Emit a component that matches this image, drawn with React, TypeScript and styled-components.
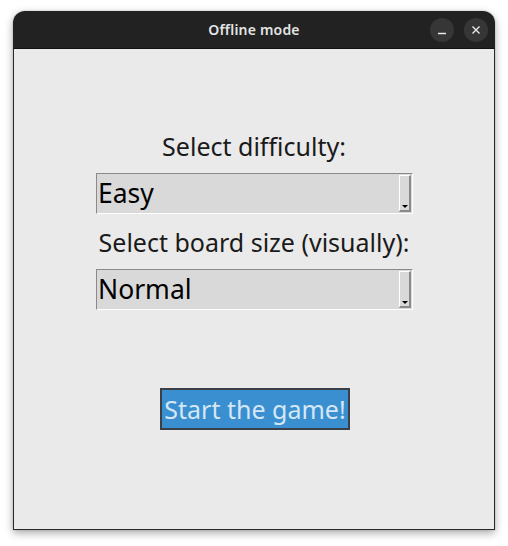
import styled, { createGlobalStyle } from "styled-components";

const GlobalStyle = createGlobalStyle`
  html, body {
    margin: 0;
    padding: 0;
    background: #ffffff;
  }
  body {
    font-family: "Noto Sans", "Open Sans", sans-serif;
  }
`;

const Screen = styled.div`
  width: 508px;
  height: 546px;
  padding: 11px 0 0 13px;
  box-sizing: border-box;
`;

const Window = styled.div`
  width: 482px;
  height: 519px;
  display: flex;
  flex-direction: column;
  border-radius: 12px 12px 0 0;
  overflow: hidden;
  box-shadow: 0 3px 8px rgba(0, 0, 0, 0.35), 0 0 1px rgba(0, 0, 0, 0.5);
`;

const TitleBar = styled.div`
  height: 37px;
  flex: none;
  background: #222222;
  display: flex;
  align-items: center;
  justify-content: center;
  position: relative;
  border-bottom: 1px solid #111;
`;

const Title = styled.div`
  color: #e4e4e4;
  font-size: 14px;
  font-weight: 600;
  letter-spacing: 0.2px;
`;

const Controls = styled.div`
  position: absolute;
  right: 7px;
  top: 7px;
  display: flex;
  gap: 10px;
`;

const RoundButton = styled.div`
  width: 24px;
  height: 24px;
  border-radius: 50%;
  background: #363636;
  display: flex;
  align-items: center;
  justify-content: center;
`;

const Body = styled.div`
  flex: 1;
  background: #eaeaea;
  border: 1px solid #2a2a2a;
  border-top: none;
  display: flex;
  flex-direction: column;
  align-items: center;
  padding-top: 82px;
`;

const Label = styled.div`
  font-size: 25px;
  line-height: 30px;
  color: #1a1a1a;
  margin-top: ${(props: { top?: number }) => props.top ?? 0}px;
`;

const Select = styled.div`
  width: 317px;
  height: 41px;
  box-sizing: border-box;
  margin-top: 12px;
  margin-left: 1px;
  background: #d9d9d9;
  border-top: 1px solid #8a8a8a;
  border-left: 1px solid #8a8a8a;
  border-right: 1px solid #ffffff;
  border-bottom: 1px solid #ffffff;
  display: flex;
  align-items: stretch;
  padding: 1px 1px 1px 0;
`;

const SelectText = styled.div`
  flex: 1;
  font-size: 26.5px;
  line-height: 37px;
  color: #000;
  padding-left: 1px;
`;

const Indicator = styled.div`
  width: 12px;
  box-sizing: border-box;
  border-top: 1px solid #ffffff;
  border-left: 1px solid #ffffff;
  border-right: 2px solid #8a8a8a;
  border-bottom: 2px solid #8a8a8a;
  display: flex;
  align-items: flex-end;
  justify-content: center;
  padding-bottom: 2px;
`;

const Arrow = styled.div`
  width: 0;
  height: 0;
  border-left: 3px solid transparent;
  border-right: 3px solid transparent;
  border-top: 3px solid #000;
`;

const StartButton = styled.div`
  margin-top: 78px;
  margin-left: 2px;
  height: 42px;
  box-sizing: border-box;
  padding: 0 2px;
  background: #3a8fd0;
  border: 2px solid #3b4046;
  color: #d5e7f5;
  font-size: 25px;
  line-height: 38px;
`;

const Dropdown = ({ value }: { value: string }) => (
  <Select>
    <SelectText>{value}</SelectText>
    <Indicator>
      <Arrow />
    </Indicator>
  </Select>
);

const App = () => {
  return (
    <>
      <GlobalStyle />
      <Screen>
        <Window>
          <TitleBar>
            <Title>Offline mode</Title>
            <Controls>
              <RoundButton>
                <svg width="10" height="10" viewBox="0 0 10 10">
                  <path d="M1 8.5h8" stroke="#e8e8e8" strokeWidth="1.4" />
                </svg>
              </RoundButton>
              <RoundButton>
                <svg width="10" height="10" viewBox="0 0 10 10">
                  <path d="M1.5 1.5l7 7M8.5 1.5l-7 7" stroke="#e8e8e8" strokeWidth="1.4" />
                </svg>
              </RoundButton>
            </Controls>
          </TitleBar>
          <Body>
            <Label>Select difficulty:</Label>
            <Dropdown value="Easy" />
            <Label top={13}>Select board size (visually):</Label>
            <Dropdown value="Normal" />
            <StartButton>Start the game!</StartButton>
          </Body>
        </Window>
      </Screen>
    </>
  );
};

export default App;
